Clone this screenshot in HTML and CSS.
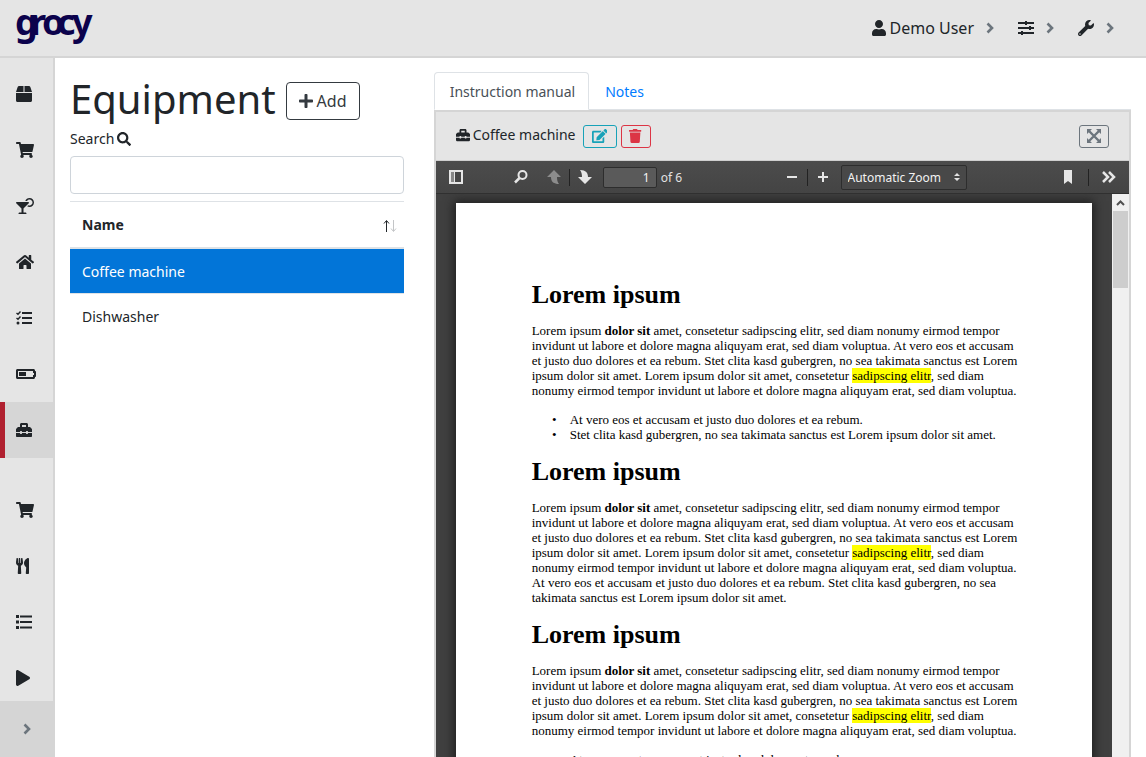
FILE: index.html
```html
<!DOCTYPE html>
<html lang="en">
<head>
<meta charset="utf-8">
<title>Equipment | grocy</title>
<link rel="stylesheet" href="styles.css">
</head>
<body>
<svg class="sprite" aria-hidden="true">
  <symbol id="cart" viewBox="0 0 576 512"><path d="M528.12 301.319l47.273-208C578.806 78.301 567.391 64 551.99 64H159.208l-9.166-44.81C147.758 8.021 137.93 0 126.529 0H24C10.745 0 0 10.745 0 24v16c0 13.255 10.745 24 24 24h69.883l70.248 343.435C147.325 417.1 136 435.222 136 456c0 30.928 25.072 56 56 56s56-25.072 56-56c0-15.674-6.447-29.835-16.824-40h209.647C430.447 426.165 424 440.326 424 456c0 30.928 25.072 56 56 56s56-25.072 56-56c0-22.172-12.888-41.332-31.579-50.405l5.517-24.276c3.413-15.018-8.002-29.319-23.403-29.319H218.117l-6.545-32h293.145c11.206 0 20.92-7.754 23.403-18.681z"/></symbol>
  <symbol id="toolbox" viewBox="0 0 512 512"><path d="M502.63 214.63l-45.25-45.25c-6-6-14.14-9.37-22.63-9.37H384V80c0-26.51-21.49-48-48-48H176c-26.51 0-48 21.49-48 48v80H77.25c-8.49 0-16.62 3.37-22.63 9.37L9.37 214.63c-6 6-9.37 14.14-9.37 22.63V320h128v-16c0-8.84 7.16-16 16-16h32c8.84 0 16 7.16 16 16v16h128v-16c0-8.84 7.16-16 16-16h32c8.84 0 16 7.16 16 16v16h128v-82.75c0-8.48-3.37-16.62-9.37-22.62zM320 160H192V96h128v64zm64 208c0 8.84-7.16 16-16 16h-32c-8.84 0-16-7.16-16-16v-16H192v16c0 8.84-7.16 16-16 16h-32c-8.84 0-16-7.16-16-16v-16H0v96c0 17.67 14.33 32 32 32h448c17.67 0 32-14.33 32-32v-96H384v16z"/></symbol>
  <symbol id="chevron" viewBox="0 0 8 12"><path d="M1.500 1.500 6 6 1.500 10.500" fill="none" stroke="currentColor" stroke-width="2.600"/></symbol>
</svg>

<header class="topbar">
  <a class="brand" href="#" aria-label="grocy">
    <svg class="logo" viewBox="0 0 84 56"><text x="0 15 27 42 57" y="35">grocy</text></svg>
  </a>
  <nav class="usermenu">
    <a href="#" class="menu-link">
      <svg class="icon" viewBox="0 0 448 512"><path d="M224 256c70.7 0 128-57.3 128-128S294.7 0 224 0 96 57.3 96 128s57.3 128 128 128zm89.600 32h-16.700c-22.200 10.200-46.900 16-72.900 16s-50.600-5.800-72.900-16h-16.700C60.200 288 0 348.200 0 422.400V464c0 26.500 21.500 48 48 48h352c26.500 0 48-21.500 48-48v-41.600c0-74.200-60.200-134.400-134.400-134.400z"/></svg>
      <span>Demo User</span>
      <svg class="chev"><use href="#chevron"/></svg>
    </a>
    <a href="#" class="menu-link" aria-label="View settings">
      <svg class="icon" viewBox="0 0 16 16"><path d="M0 2h16v2H0zM0 7h16v2H0zM0 12h16v2H0zM7 1h2v4H7zM11 6h2v4h-2zM3 11h2v4H3z"/></svg>
      <svg class="chev"><use href="#chevron"/></svg>
    </a>
    <a href="#" class="menu-link" aria-label="Settings">
      <svg class="icon" viewBox="0 0 512 512"><path d="M507.730 109.100c-2.240-9.030-13.540-12.090-20.120-5.510l-74.360 74.360-67.880-11.310-11.310-67.880 74.360-74.360c6.620-6.620 3.430-17.900-5.660-20.160-47.380-11.740-99.550.91-136.580 37.930-39.640 39.640-50.550 97.100-34.050 147.200L18.740 402.760c-24.990 24.990-24.990 65.510 0 90.500 24.990 24.990 65.510 24.990 90.500 0l213.210-213.210c50.120 16.710 107.470 5.680 147.370-34.220 37.070-37.070 49.700-89.320 37.910-136.730zM64 472c-13.250 0-24-10.750-24-24 0-13.260 10.750-24 24-24s24 10.740 24 24c0 13.250-10.750 24-24 24z"/></svg>
      <svg class="chev"><use href="#chevron"/></svg>
    </a>
  </nav>
</header>

<div class="shell">
  <aside class="sidebar">
    <nav class="sidenav">
      <a href="#" aria-label="Stock overview"><svg class="icon" viewBox="0 0 512 512"><path d="M509.500 184.600L458.900 32.800C452.400 13.200 434.100 0 413.400 0H272v192h238.700c-.4-2.500-.4-5-1.200-7.400zM240 0H98.600c-20.700 0-39 13.200-45.500 32.800L2.500 184.600c-.8 2.400-.8 4.900-1.200 7.400H240V0zM0 224v240c0 26.500 21.500 48 48 48h416c26.500 0 48-21.500 48-48V224H0z"/></svg></a>
      <a href="#" aria-label="Shopping list"><svg class="icon wide"><use href="#cart"/></svg></a>
      <a href="#" aria-label="Recipes"><svg class="icon" viewBox="0 0 576 512"><path d="M296 464h-56V338.780l168.740-168.730c15.520-15.520 4.530-42.050-17.420-42.050H24.680c-21.950 0-32.940 26.530-17.420 42.050L176 338.780V464h-56c-22.090 0-40 17.910-40 40 0 4.420 3.580 8 8 8h240c4.420 0 8-3.580 8-8 0-22.090-17.910-40-40-40zM432 0c-62.610 0-115.350 40.200-135.180 96h52.540c16.650-28.550 47.270-48 82.640-48 52.930 0 96 43.060 96 96s-43.070 96-96 96c-14.040 0-27.290-3.200-39.320-8.640l-35.260 35.260C379.230 279.920 404.590 288 432 288c79.530 0 144-64.470 144-144S511.530 0 432 0z"/></svg></a>
      <a href="#" aria-label="Chores"><svg class="icon" viewBox="0 0 576 512"><path d="M280.370 148.260L96 300.110V464a16 16 0 0 0 16 16l112.060-.29a16 16 0 0 0 15.920-16V368a16 16 0 0 1 16-16h64a16 16 0 0 1 16 16v95.640a16 16 0 0 0 16 16.050L464 480a16 16 0 0 0 16-16V300L295.670 148.260a12.190 12.190 0 0 0-15.300 0zM571.600 251.470L488 182.560V44.050a12 12 0 0 0-12-12h-56a12 12 0 0 0-12 12v72.610L318.470 43a48 48 0 0 0-61 0L4.340 251.470a12 12 0 0 0-1.600 16.900l25.500 31A12 12 0 0 0 45.150 301l235.220-193.740a12.190 12.190 0 0 1 15.300 0L530.900 301a12 12 0 0 0 16.900-1.600l25.500-31a12 12 0 0 0-1.700-16.930z"/></svg></a>
      <a href="#" aria-label="Tasks"><svg class="icon" viewBox="0 0 16 16"><path d="M6 2h10v2H6zM6 7h10v2H6zM6 12h10v2H6z"/><circle cx="2" cy="13" r="1.500"/><path d="M.5 3 2 4.300 4.500 1.500M.5 8 2 9.300 4.500 6.500" fill="none" stroke="currentColor" stroke-width="1.400"/></svg></a>
      <a href="#" aria-label="Batteries"><svg class="icon" viewBox="0 0 640 512"><path d="M544 160v64h32v64h-32v64H64V160h480m16-64H48c-26.510 0-48 21.490-48 48v224c0 26.510 21.490 48 48 48h512c26.510 0 48-21.490 48-48v-16h8c13.255 0 24-10.745 24-24V184c0-13.255-10.745-24-24-24h-8v-16c0-26.510-21.490-48-48-48zm-240 96H96v128h224V192z"/></svg></a>
      <a href="#" class="active" aria-label="Equipment"><svg class="icon square"><use href="#toolbox"/></svg></a>
    </nav>
    <nav class="sidenav second">
      <a href="#" aria-label="Purchase"><svg class="icon wide"><use href="#cart"/></svg></a>
      <a href="#" aria-label="Consume"><svg class="icon" viewBox="0 0 416 512"><path d="M207.900 15.200c.8 4.700 16.100 94.500 16.100 128.800 0 52.300-27.800 89.600-68.900 104.600L168 486.700c.7 13.700-10.200 25.300-24 25.300H80c-13.700 0-24.700-11.500-24-25.300l12.900-238.100C27.700 233.600 0 196.200 0 144 0 109.600 15.300 19.900 16.100 15.200 19.300-5.100 61.400-5.400 64 16.300v141.200c1.300 3.400 15.100 3.200 16 0 1.400-25.300 7.900-139.200 8-141.800 3.300-20.800 44.700-20.800 47.900 0 .2 2.700 6.600 116.500 8 141.800.9 3.200 14.800 3.400 16 0V16.300c2.600-21.600 44.800-21.400 48-1.100zm119.200 285.700l-15 185.100c-1.200 14 9.900 26 23.900 26h56c13.300 0 24-10.700 24-24V24c0-13.200-10.700-24-24-24-82.500 0-221.400 178.500-64.900 300.900z"/></svg></a>
      <a href="#" aria-label="Inventory"><svg class="icon" viewBox="0 0 16 16"><path d="M0 1h3v3H0zM0 6.500h3v3H0zM0 12h3v3H0zM4 1.500h12v2H4zM4 7h12v2H4zM4 12.500h12v2H4z"/></svg></a>
      <a href="#" aria-label="Chore tracking"><svg class="icon" viewBox="0 0 448 512"><path d="M424.400 214.700L72.400 6.600C43.800-10.300 0 6.100 0 47.900V464c0 37.500 40.700 60.100 72.400 41.300l352-208c31.400-18.500 31.500-64.100 0-82.600z"/></svg></a>
    </nav>
    <button class="collapse" type="button" aria-label="Toggle sidebar"><svg class="chev"><use href="#chevron"/></svg></button>
  </aside>

  <main class="content">
    <section class="list-col">
      <div class="title-row">
        <h1>Equipment</h1>
        <a href="#" class="btn btn-add"><svg class="icon" viewBox="0 0 448 512"><path d="M416 208H272V64c0-17.670-14.330-32-32-32h-32c-17.670 0-32 14.330-32 32v144H32c-17.670 0-32 14.330-32 32v32c0 17.670 14.330 32 32 32h144v144c0 17.670 14.330 32 32 32h32c17.670 0 32-14.330 32-32V304h144c17.670 0 32-14.330 32-32v-32c0-17.670-14.330-32-32-32z"/></svg>Add</a>
      </div>
      <label class="search-label" for="search">Search
        <svg class="icon small" viewBox="0 0 512 512"><path fill-rule="evenodd" d="M505 442.700L405.300 343c-4.500-4.500-10.600-7-17-7H372c27.600-35.300 44-79.700 44-128C416 93.100 322.900 0 208 0S0 93.100 0 208s93.100 208 208 208c48.300 0 92.700-16.400 128-44v16.300c0 6.400 2.500 12.500 7 17l99.700 99.700c9.400 9.400 24.600 9.400 33.900 0l28.300-28.300c9.400-9.400 9.400-24.600.1-34zM208 336c-70.700 0-128-57.200-128-128 0-70.700 57.200-128 128-128 70.700 0 128 57.200 128 128 0 70.700-57.200 128-128 128z"/></svg>
      </label>
      <input class="search" id="search" type="text">
      <table class="items">
        <thead><tr><th><div class="th-inner">Name
          <svg class="sort" viewBox="0 0 14 14"><path class="up" d="M3.500 14V3M1 5.500 3.500 2.500 6 5.500"/><path class="down" d="M10.500 2v11M8 10.500l2.500 3 2.500-3"/></svg>
        </div></th></tr></thead>
        <tbody>
          <tr class="selected"><td>Coffee machine</td></tr>
          <tr><td>Dishwasher</td></tr>
        </tbody>
      </table>
    </section>

    <section class="detail-col">
      <div class="tabs">
        <a href="#" class="tab current">Instruction manual</a>
        <a href="#" class="tab">Notes</a>
      </div>
      <div class="card">
        <div class="card-head">
          <div class="card-title"><svg class="icon square small"><use href="#toolbox"/></svg>Coffee machine</div>
          <button type="button" class="btn-sm edit" aria-label="Edit"><svg class="icon" viewBox="0 0 576 512"><path d="M402.600 83.200l90.200 90.200c3.800 3.800 3.800 10 0 13.800L274.400 405.600l-92.800 10.300c-12.400 1.400-22.900-9.100-21.500-21.500l10.300-92.800L388.800 83.200c3.800-3.800 10-3.800 13.800 0zm162-22.900l-48.800-48.800c-15.200-15.200-39.900-15.200-55.200 0l-35.400 35.400c-3.800 3.800-3.800 10 0 13.800l90.200 90.200c3.800 3.800 10 3.800 13.800 0l35.400-35.400c15.200-15.300 15.200-40 0-55.200zM384 346.200V448H64V128h229.800c3.200 0 6.200-1.300 8.500-3.500l40-40c7.600-7.600 2.200-20.500-8.500-20.500H48C21.500 64 0 85.500 0 112v352c0 26.500 21.500 48 48 48h352c26.500 0 48-21.500 48-48V306.200c0-10.700-12.900-16-20.500-8.500l-40 40c-2.200 2.300-3.500 5.300-3.500 8.500z"/></svg></button>
          <button type="button" class="btn-sm delete" aria-label="Delete"><svg class="icon" viewBox="0 0 448 512"><path d="M432 32H312l-9.400-18.700A24 24 0 0 0 281.100 0H166.800a23.720 23.720 0 0 0-21.400 13.300L136 32H16A16 16 0 0 0 0 48v32a16 16 0 0 0 16 16h416a16 16 0 0 0 16-16V48a16 16 0 0 0-16-16zM53.200 467a48 48 0 0 0 47.900 45h245.800a48 48 0 0 0 47.900-45L416 128H32z"/></svg></button>
          <button type="button" class="btn-sm expand" aria-label="Fullscreen"><svg class="icon" viewBox="0 0 14 14"><path d="M0 0h5L0 5zM14 0v5L9 0zM0 14V9l5 5zM14 14H9l5-5z"/><path d="M2 2l10 10M12 2 2 12" stroke="currentColor" stroke-width="2.400"/></svg></button>
        </div>
        <div class="pdf">
          <div class="pdf-bar">
            <div class="bar-left">
              <button type="button" class="tool" aria-label="Toggle sidebar"><svg viewBox="0 0 16 16"><path fill-rule="evenodd" d="M1 1h14v14H1zM3 3v10h3V3zM7 3v10h6V3z"/><path d="M3 3h3v10H3z" fill="#888"/></svg></button>
              <button type="button" class="tool find" aria-label="Find"><svg viewBox="0 0 16 16"><circle cx="9.500" cy="6" r="4" fill="none" stroke="currentColor" stroke-width="2"/><path d="M6.500 9 2 13.500" stroke="currentColor" stroke-width="2.500"/></svg></button>
              <button type="button" class="tool prev" disabled aria-label="Previous page"><svg viewBox="0 0 16 16"><path d="M8 1l7 7h-4c0 3 .5 5 2 7-5 0-8-2-8-7H1z"/></svg></button>
              <span class="sep"></span>
              <button type="button" class="tool next" aria-label="Next page"><svg viewBox="0 0 16 16"><path d="M8 15l7-7h-4C11 4 9 1 3 1c1.500 2 2 4 2 7H1z"/></svg></button>
              <label class="pages"><input class="page-no" type="text" value="1" aria-label="Page"> of 6</label>
            </div>
            <div class="bar-mid">
              <button type="button" class="tool" aria-label="Zoom out"><svg viewBox="0 0 16 16"><path d="M3 7h10v2H3z"/></svg></button>
              <span class="sep"></span>
              <button type="button" class="tool" aria-label="Zoom in"><svg viewBox="0 0 16 16"><path d="M3 7h10v2H3zM7 3h2v10H7z"/></svg></button>
              <div class="zoom">
                <select aria-label="Zoom"><option>Automatic Zoom</option></select>
                <svg class="updown" viewBox="0 0 6 8"><path d="M0 3l3-3 3 3zM0 5l3 3 3-3z"/></svg>
              </div>
            </div>
            <div class="bar-right">
              <button type="button" class="tool" aria-label="Bookmark"><svg viewBox="0 0 16 16"><path d="M4 1h8v14l-4-3-4 3z"/></svg></button>
              <span class="sep"></span>
              <button type="button" class="tool" aria-label="Tools"><svg viewBox="0 0 16 16"><path d="M2 3l5 5-5 5M8 3l5 5-5 5" fill="none" stroke="currentColor" stroke-width="2.500"/></svg></button>
            </div>
          </div>
          <div class="pdf-view">
            <div class="pages-area">
              <article class="sheet">
                <h2>Lorem ipsum</h2>
                <p>Lorem ipsum <b>dolor sit</b> amet, consetetur sadipscing elitr, sed diam nonumy eirmod tempor invidunt ut labore et dolore magna aliquyam erat, sed diam voluptua. At vero eos et accusam et justo duo dolores et ea rebum. Stet clita kasd gubergren, no sea takimata sanctus est Lorem ipsum dolor sit amet. Lorem ipsum dolor sit amet, consetetur <mark>sadipscing elitr</mark>, sed diam nonumy eirmod tempor invidunt ut labore et dolore magna aliquyam erat, sed diam voluptua.</p>
                <ul><li>At vero eos et accusam et justo duo dolores et ea rebum.</li><li>Stet clita kasd gubergren, no sea takimata sanctus est Lorem ipsum dolor sit amet.</li></ul>
                <h2>Lorem ipsum</h2>
                <p>Lorem ipsum <b>dolor sit</b> amet, consetetur sadipscing elitr, sed diam nonumy eirmod tempor invidunt ut labore et dolore magna aliquyam erat, sed diam voluptua. At vero eos et accusam et justo duo dolores et ea rebum. Stet clita kasd gubergren, no sea takimata sanctus est Lorem ipsum dolor sit amet. Lorem ipsum dolor sit amet, consetetur <mark>sadipscing elitr</mark>, sed diam nonumy eirmod tempor invidunt ut labore et dolore magna aliquyam erat, sed diam voluptua. At vero eos et accusam et justo duo dolores et ea rebum. Stet clita kasd gubergren, no sea takimata sanctus est Lorem ipsum dolor sit amet.</p>
                <h2>Lorem ipsum</h2>
                <p>Lorem ipsum <b>dolor sit</b> amet, consetetur sadipscing elitr, sed diam nonumy eirmod tempor invidunt ut labore et dolore magna aliquyam erat, sed diam voluptua. At vero eos et accusam et justo duo dolores et ea rebum. Stet clita kasd gubergren, no sea takimata sanctus est Lorem ipsum dolor sit amet. Lorem ipsum dolor sit amet, consetetur <mark>sadipscing elitr</mark>, sed diam nonumy eirmod tempor invidunt ut labore et dolore magna aliquyam erat, sed diam voluptua.</p>
                <ul><li>At vero eos et accusam et justo duo dolores et ea rebum.</li></ul>
              </article>
            </div>
            <div class="scrollbar">
              <svg class="scroll-up" viewBox="0 0 9 6"><path d="M1 5l3.500-3.500L8 5" fill="none" stroke="currentColor" stroke-width="2"/></svg>
              <div class="thumb"></div>
            </div>
          </div>
        </div>
      </div>
    </section>
  </main>
</div>
</body>
</html>
```
FILE: styles.css
```css
* { box-sizing: border-box; }
body {
  margin: 0;
  height: 100vh;
  display: flex;
  flex-direction: column;
  overflow: hidden;
  background: #fff;
  color: #212529;
  font: 14px/21px "Noto Sans", sans-serif;
}
a { color: inherit; text-decoration: none; }
button { font: inherit; cursor: pointer; }
svg { fill: currentColor; display: block; flex: none; }
.sprite { position: absolute; width: 0; height: 0; }
.icon { height: 16px; width: auto; }
.icon.wide { width: 18px; }
.icon.square { width: 16px; }
.icon.small { height: 14px; width: 14px; }
.chev { width: 8px; height: 12px; color: #6c757d; }

.topbar {
  flex: none;
  height: 58px;
  display: flex;
  align-items: center;
  justify-content: space-between;
  padding: 0 32px 0 15px;
  background: #e5e5e5;
  border-bottom: 2px solid #d5d5d5;
}
.logo { width: 84px; height: 56px; overflow: visible; }
.logo text { font: bold 36px "Noto Sans", sans-serif; fill: #0b024c; }
.usermenu { display: flex; gap: 24px; }
.menu-link { display: flex; align-items: center; font-size: 16px; line-height: 24px; }
.menu-link span { margin-left: 4px; }
.menu-link .chev { margin-left: 12px; }

.shell { flex: 1; min-height: 0; display: flex; }
.sidebar {
  flex: none;
  width: 55px;
  display: flex;
  flex-direction: column;
  padding-top: 8px;
  overflow: hidden;
  background: #e5e5e5;
  border-right: 2px solid #d5d5d5;
}
.sidenav { flex: none; }
.sidenav a { display: flex; align-items: center; height: 56px; padding-left: 16px; }
.sidenav a.active { background: #d6d6d6; border-left: 5px solid #b0202f; padding-left: 11px; }
.sidenav.second { flex: 1; min-height: 0; overflow: hidden; padding-top: 24px; }
.collapse {
  flex: none;
  height: 56px;
  display: flex;
  align-items: center;
  justify-content: center;
  padding: 0;
  border: 0;
  background: #d5d5d5;
}

.content { flex: 1; min-width: 0; display: flex; }
.list-col { flex: 0 0 33.333%; padding: 16px 15px 0; }
.detail-col { flex: 1; min-width: 0; padding: 14px 15px 0; display: flex; flex-direction: column; }
.title-row { display: flex; align-items: center; gap: 10px; height: 54px; }
h1 { margin: 0; padding-bottom: 4px; font-size: 40px; line-height: 48px; font-weight: 400; }
.btn-add {
  display: flex;
  align-items: center;
  gap: 4px;
  height: 38px;
  padding: 0 12px;
  border: 1px solid #343a40;
  border-radius: 4px;
  color: #343a40;
  font-size: 16px;
}
.search-label { display: flex; align-items: center; gap: 3px; height: 21px; }
.search {
  display: block;
  width: 100%;
  height: 38px;
  margin: 7px 0;
  padding: 6px 12px;
  border: 1px solid #ced4da;
  border-radius: 4px;
  font: inherit;
}
.items { width: 100%; border-collapse: separate; border-spacing: 0; }
.items th { padding: 12px 7px 12px 12px; height: 48px; border-top: 1px solid #dee2e6; border-bottom: 2px solid #dee2e6; text-align: left; }
.items td { padding: 13px 12px 11px; line-height: 20px; border-bottom: 1px solid #dee2e6; }
.items tr:last-child td { border-bottom: 0; }
.th-inner { display: flex; align-items: center; justify-content: space-between; }
.sort { width: 14px; height: 14px; fill: none; stroke-width: 1; }
.sort .up { stroke: #212529; }
.sort .down { stroke: #c3c5c7; }
.selected td { background: #0275d8; color: #fff; }

.tabs { flex: none; display: flex; border-bottom: 1px solid #dee2e6; height: 38px; }
.tab { height: 38px; padding: 8px 13px 8px 15px; border: 1px solid transparent; color: #007bff; }
.tab.current { color: #495057; border-color: #dee2e6 #dee2e6 #fff; border-radius: 4px 4px 0 0; background: #fff; }
.card { flex: 1; min-height: 0; display: flex; flex-direction: column; border: 2px solid #d5d5d5; border-bottom: 0; }
.card-head { flex: none; display: flex; align-items: center; height: 49px; padding: 0 20px; background: #e5e5e5; border-bottom: 1px solid #cfcfcf; }
.card-title { display: flex; align-items: center; gap: 3px; margin-right: 7px; padding-bottom: 3px; }
.btn-sm {
  display: flex;
  align-items: center;
  justify-content: center;
  height: 23px;
  width: 30px;
  margin-right: 4px;
  padding: 0;
  border: 1px solid;
  border-radius: 3px;
  background: transparent;
}
.btn-sm .icon { height: 14px; }
.edit { width: 34px; color: #17a2b8; }
.delete { color: #dc3545; }
.expand { margin: 0 0 0 auto; color: #6c757d; }

.pdf { flex: 1; min-height: 0; display: flex; flex-direction: column; background: #404040; }
.pdf-bar {
  flex: none;
  height: 33px;
  display: flex;
  align-items: center;
  justify-content: space-between;
  padding: 0 12px;
  background: linear-gradient(#4c4c4c, #444);
  border-bottom: 1px solid #303030;
  color: #e2e2e2;
  font-size: 12px;
}
.bar-left, .bar-mid, .bar-right { display: flex; align-items: center; }
.tool { padding: 0; border: 0; background: none; color: #e6e6e6; }
.tool svg { width: 16px; height: 16px; }
.tool:disabled { color: #8c8c8c; }
.find { margin-left: 49px; }
.prev { margin-left: 17px; }
.sep { width: 1px; height: 17px; margin: 0 7px; background: #222; }
.pages { display: flex; align-items: center; gap: 4px; margin-left: 10px; }
.page-no {
  width: 54px;
  height: 21px;
  padding: 0 6px;
  border: 1px solid #2d2d2d;
  border-radius: 2px;
  background: #5a5a5a;
  color: #f2f2f2;
  font: inherit;
  text-align: right;
}
.bar-mid { margin-right: -8px; }
.zoom { position: relative; margin-left: 10px; }
.zoom select {
  appearance: none;
  display: block;
  width: 126px;
  height: 25px;
  padding: 0 6px;
  border: 1px solid #2d2d2d;
  border-radius: 2px;
  background: #484848;
  color: #f2f2f2;
  font: inherit;
}
.updown { position: absolute; right: 7px; top: 8px; width: 6px; height: 8px; }
.bar-right .sep { margin: 0 12px; }

.pdf-view { flex: 1; min-height: 0; display: flex; }
.pages-area { flex: 1; min-width: 0; overflow: hidden; padding: 9px 20px 0; }
.sheet {
  min-height: 900px;
  padding: 76px 70px 0 76px;
  background: #fff;
  color: #000;
  box-shadow: 0 0 10px 2px #1c1c1c;
  font: 13px/15px "Liberation Serif", serif;
}
.sheet h2 { margin: 0 0 12px; font-size: 26px; line-height: 32px; }
.sheet p { margin: 0 0 14px; }
.sheet ul { margin: 0 0 14px; padding-left: 38px; list-style: "•\2003"; }
.sheet mark { background: #ff0; }
.scrollbar { flex: none; width: 17px; padding: 0 1px; background: #f0f0f0; }
.scroll-up { width: 9px; height: 6px; margin: 6px auto 5px; color: #505050; }
.thumb { height: 77px; background: #cdcdcd; }
```
